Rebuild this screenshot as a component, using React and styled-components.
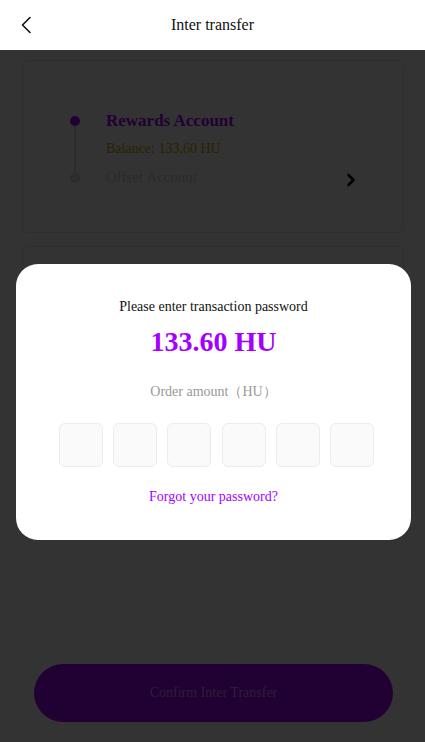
import React from "react";
import styled, { createGlobalStyle } from "styled-components";

const Global = createGlobalStyle`
  html, body { margin: 0; padding: 0; background: #fff; }
  body { font-family: "Liberation Serif", "Times New Roman", serif; color: #111; }
  * { box-sizing: border-box; }
`;

const Page = styled.div`
  display: flex;
  flex-direction: column;
  min-height: 742px;
  width: 425px;
  background: #fff;
`;

const Header = styled.header`
  position: relative;
  z-index: 2;
  height: 50px;
  display: flex;
  align-items: center;
  justify-content: center;
  background: #fff;
  flex-shrink: 0;
`;

const BackButton = styled.button`
  position: absolute;
  left: 14px;
  top: 13px;
  width: 24px;
  height: 24px;
  padding: 0;
  border: none;
  background: none;
  display: flex;
  align-items: center;
  justify-content: center;
`;

const Title = styled.h1`
  margin: 0;
  font-size: 16px;
  font-weight: 400;
  line-height: 20px;
  color: #111;
`;

const Content = styled.main`
  flex: 1;
  display: flex;
  flex-direction: column;
  padding: 10px 21px 20px 22px;
`;

const Card = styled.section`
  border: 1px solid #e6e6e6;
  border-radius: 6px;
  background: #fff;
  height: ${(p) => p.$h}px;
  margin-bottom: ${(p) => p.$mb || 0}px;
`;

const AccountRow = styled.div`
  display: flex;
  align-items: flex-end;
  padding: 50px 47px 0 47px;
`;

const Timeline = styled.div`
  display: flex;
  flex-direction: column;
  align-items: center;
  width: 10px;
  margin-top: 5px;
  align-self: flex-start;
`;

const Dot = styled.span`
  width: 10px;
  height: 10px;
  border-radius: 50%;
  background: ${(p) => p.$color};
  border: ${(p) => (p.$ring ? "2px solid #d6d6d6" : "none")};
`;

const Line = styled.span`
  width: 2px;
  height: 47px;
  background: #d9d9d9;
`;

const Texts = styled.div`
  display: flex;
  flex-direction: column;
  gap: 8px;
  margin-left: 26px;
  flex: 1;
`;

const AccountName = styled.div`
  font-size: ${(p) => p.$size}px;
  font-weight: ${(p) => (p.$bold ? 700 : 400)};
  color: ${(p) => p.$color};
  line-height: 20px;
  white-space: nowrap;
`;

const Chevron = styled.span`
  display: flex;
  width: 10px;
  height: 14px;
`;

const ConfirmButton = styled.button`
  margin: auto 11px 0 12px;
  height: 58px;
  border: none;
  border-radius: 29px;
  background: #a500ff;
  color: rgba(255, 255, 255, 0.6);
  font-family: inherit;
  font-size: 14px;
`;

const Overlay = styled.div`
  position: fixed;
  top: 50px;
  left: 0;
  right: 0;
  bottom: 0;
  background: rgba(0, 0, 0, 0.8);
  display: flex;
  align-items: center;
  justify-content: center;
  padding: 12px 14px 0 16px;
  z-index: 1;
`;

const Modal = styled.div`
  width: 100%;
  background: #fff;
  border-radius: 22px;
  padding: 33px 0 33px;
  display: flex;
  flex-direction: column;
  align-items: center;
`;

const Prompt = styled.div`
  font-size: 14px;
  line-height: 20px;
  color: #111;
`;

const Amount = styled.div`
  margin-top: 8px;
  font-size: 28px;
  font-weight: 700;
  line-height: 34px;
  color: #a300ff;
`;

const OrderLabel = styled.div`
  margin-top: 23px;
  font-size: 14px;
  line-height: 20px;
  color: #999;
`;

const Boxes = styled.div`
  margin-top: 21px;
  align-self: stretch;
  display: grid;
  grid-template-columns: repeat(6, 44px);
  column-gap: 10.2px;
  padding-left: 43px;
`;

const Box = styled.div`
  height: 44px;
  border: 1px solid #ececec;
  border-radius: 6px;
  background: #fafafa;
`;

const Forgot = styled.a`
  margin-top: 20px;
  font-size: 14px;
  line-height: 20px;
  color: #a300ff;
  text-decoration: none;
`;

export default function App() {
  return (
    <>
      <Global />
      <Page>
        <Header>
          <BackButton aria-label="back">
            <svg width="14" height="18" viewBox="0 0 14 18" fill="none">
              <path d="M11 1.5 L3.5 9 L11 16.5" stroke="#111" strokeWidth="1.6" strokeLinecap="round" strokeLinejoin="round" />
            </svg>
          </BackButton>
          <Title>Inter transfer</Title>
        </Header>
        <Content>
          <Card $h={173} $mb={13}>
            <AccountRow>
              <Timeline>
                <Dot $color="#a500ff" />
                <Line />
                <Dot $color="#e6e6e6" $ring />
              </Timeline>
              <Texts>
                <AccountName $size={17} $bold $color="#a500ff">Rewards Account</AccountName>
                <AccountName $size={14} $color="#d9a400">Balance: 133.60 HU</AccountName>
                <AccountName $size={15} $color="#cfcfcf">Offset Account</AccountName>
              </Texts>
              <Chevron>
                <svg width="10" height="14" viewBox="0 0 10 14" fill="none">
                  <path d="M2.5 2 L7.5 7 L2.5 12" stroke="#000" strokeWidth="2.6" strokeLinecap="round" strokeLinejoin="round" />
                </svg>
              </Chevron>
            </AccountRow>
          </Card>
          <Card $h={260} />
          <ConfirmButton>Confirm Inter Transfer</ConfirmButton>
        </Content>
      </Page>
      <Overlay>
        <Modal>
          <Prompt>Please enter transaction password</Prompt>
          <Amount>133.60 HU</Amount>
          <OrderLabel>Order amount（HU）</OrderLabel>
          <Boxes>
            {Array.from({ length: 6 }).map((_, i) => (
              <Box key={i} />
            ))}
          </Boxes>
          <Forgot href="#">Forgot your password?</Forgot>
        </Modal>
      </Overlay>
    </>
  );
}
